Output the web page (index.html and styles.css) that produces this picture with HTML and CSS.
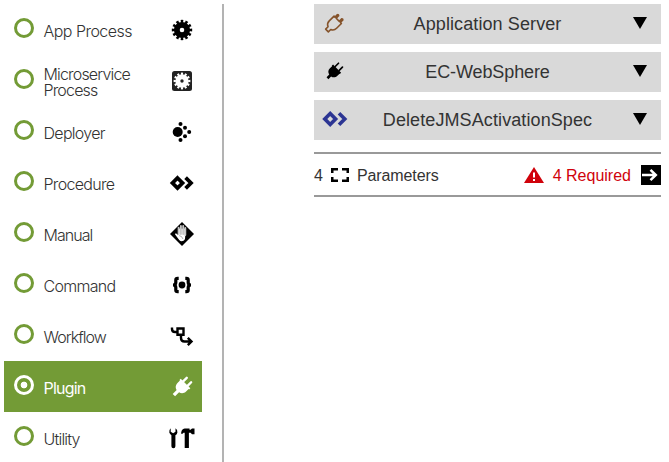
FILE: index.html
```
<!DOCTYPE html>
<html lang="en">
<head>
<meta charset="utf-8">
<title>Process step</title>
<link rel="stylesheet" href="styles.css">
</head>
<body>
<main class="page">
  <nav class="types">
    <div class="type"><i class="radio"></i><span class="label l-app">App Process</span>
      <svg class="icon" viewBox="-13 -13 26 26"><circle r="5.2" fill="none" stroke="#000" stroke-width="5.8"/><circle r="8.7" fill="none" stroke="#000" stroke-width="3" pathLength="24" stroke-dasharray="1.1 .9" stroke-dashoffset=".55"/></svg></div>
    <div class="type"><i class="radio"></i><span class="label l-micro">Microservice<br>Process</span>
      <svg class="icon" viewBox="-13 -13 26 26"><rect x="-10" y="-10" width="20" height="20" rx="2.5" fill="#222"/><circle r="4.2" fill="none" stroke="#fff" stroke-width="5"/><circle r="7.2" fill="none" stroke="#fff" stroke-width="2.4" pathLength="24" stroke-dasharray="1.1 .9" stroke-dashoffset=".55"/></svg></div>
    <div class="type"><i class="radio"></i><span class="label l-deploy">Deployer</span>
      <svg class="icon" viewBox="-13 -13 26 26"><circle cx="-4.3" r="5"/><circle cx="-1.5" cy="-8" r="2"/><circle cx="3" cy="-4.3" r="2"/><circle cx="7.2" r="2"/><circle cx="3" cy="4.3" r="2"/><circle cx="-1.5" cy="8" r="2"/></svg></div>
    <div class="type"><i class="radio"></i><span class="label l-proc">Procedure</span>
      <svg class="icon" viewBox="-13 -13 26 26"><path d="M-4.5-5L.5 0-4.5 5-9.5 0ZM3.6-5.4L9 0 3.6 5.4" fill="none" stroke="#000" stroke-width="3.8"/></svg></div>
    <div class="type"><i class="radio"></i><span class="label l-manual">Manual</span>
      <svg class="icon" viewBox="-13 -13 26 26"><path d="M0-12L12 0 0 12-12 0Z"/><path d="M-4-5.5L-3.8 1-5.4-.2C-6.5-1-7.5-.2-6.7.8L-2.8 6C-1 8 1.7 7.4 3 5L3.8-5.2" fill="#fff"/><path d="M-3.4-6.4V0M-1.1-8V0M1.2-8V0M3.3-6V1" stroke="#c4c4c4" stroke-width="1.9" stroke-linecap="round"/><path d="M-2.8 1.6Q0 2 1 5" fill="none" stroke="#777" stroke-width=".6"/></svg></div>
    <div class="type"><i class="radio"></i><span class="label l-command">Command</span>
      <svg class="icon" viewBox="-13 -13 26 26"><circle r="3.4"/><path d="M-3.3-6.6H-4.4Q-6.2-6.6-6.2-5V-2.5Q-6.2 0-9 0-6.2 0-6.2 2.5V5Q-6.2 6.6-4.4 6.6H-3.3M3.3-6.6H4.4Q6.2-6.6 6.2-5V-2.5Q6.2 0 9 0 6.2 0 6.2 2.5V5Q6.2 6.6 4.4 6.6H3.3" fill="none" stroke="#000" stroke-width="3.2"/></svg></div>
    <div class="type"><i class="radio"></i><span class="label l-work">Workflow</span>
      <svg class="icon" viewBox="-13 -13 26 26"><path d="M-10-8.5V-7Q-10-4-7-4H-5M-4.5-7.5H1.5V-1.2H-4.5ZM-1 0V2Q-1 5.5 2.5 5.5H9.5M5.8 1.8L9.5 5.5 5.8 9.2" fill="none" stroke="#000" stroke-width="2.4"/></svg></div>
    <div class="type selected"><i class="radio"></i><span class="label l-plugin">Plugin</span>
      <svg class="icon plug" viewBox="-13 -13 26 26"><g transform="translate(.3 -.3) rotate(45)" fill="#fff"><path d="M-6.8-4.6H6.8V-2.8H6.1V.4C6.1 4 4 5.7 1.7 6.3V11.9H-1.7V6.3C-4 5.7-6.1 4-6.1.4V-2.8H-6.8Z"/><path d="M-3.1-4V-9.4M3.1-4V-9.4" stroke="#fff" stroke-width="2.4" stroke-linecap="round"/></g></svg></div>
    <div class="type"><i class="radio"></i><span class="label l-util">Utility</span>
      <svg class="icon" viewBox="-13 -13 26 26"><path d="M-11.3-9.8Q-13.4-7.8-12.7-5.4-12.1-3.6-10.6-2.8V8.2Q-10.6 10.3-8.6 10.3T-6.6 8.2V-2.8Q-4.9-3.7-4.6-5.6-4.3-8.2-6.5-9.8V-6.3L-8.9-4.8-11.3-6.3ZM-.9-4.3C-.7-8 .5-9.6 4-9.6H7.5V-8.2H8.6L10-9.6H12.5V-3.7H10L8.6-5.2H6.9V10H2.7V-5.2H1.5L.6-4.3Z"/></svg></div>
  </nav>
  <section class="detail">
    <div class="select"><svg class="lead" viewBox="-13 -13 26 26"><g transform="translate(-.8 .3) rotate(45)" fill="none" stroke="#85532b" stroke-width="1.6" stroke-linejoin="round"><path d="M-5.2-5H-3.8V-8.4Q-3-9.4-2.2-8.4V-5H2.2V-8.4Q3-9.4 3.8-8.4V-5H5.2V1.8C5.2 5 3.4 6.2 1.9 6.8V10.2H-1.9V6.8C-3.4 6.2-5.2 5-5.2 1.8Z"/></g></svg><span class="name n-app">Application Server</span><i class="caret"></i></div>
    <div class="select"><svg class="lead" viewBox="-13 -13 26 26"><g transform="translate(-.6 .3) rotate(45)"><path d="M-5.7-3.8H5.7V-2H5.3V1C5.3 4 3.5 5.5 1.3 6V9.8H-1.3V6C-3.5 5.5-5.3 4-5.3 1V-2H-5.7Z"/><path d="M-2.8-4V-8.6M2.8-4V-8.6" stroke="#000" stroke-width="1.7" stroke-linecap="round"/></g></svg><span class="name n-ec">EC-WebSphere</span><i class="caret"></i></div>
    <div class="select"><svg class="lead" viewBox="-13 -13 26 26"><path d="M-4.8-5.4L.6 0-4.8 5.4-10.2 0ZM4-5.8L9.8 0 4 5.8" fill="none" stroke="#2c3593" stroke-width="3.6"/></svg><span class="name n-delete">DeleteJMSActivationSpec</span><i class="caret"></i></div>
    <div class="params">
      <span class="count">4</span>
      <svg class="brackets" viewBox="0 0 18 14"><path d="M7 1.25H1.25V5M1.25 9V12.75H7M11 1.25H16.75V5M16.75 9V12.75H11" fill="none" stroke="#000" stroke-width="2.5"/></svg>
      <span class="ptext">Parameters</span>
      <svg class="warn" viewBox="0 0 20 16"><path d="M10 0L20 16H0Z" fill="#d0020b"/><path d="M10 5.5V10.5M10 12V14" stroke="#fff" stroke-width="2"/></svg>
      <span class="required">4 Required</span>
      <svg class="go" viewBox="0 0 20 20"><path d="M0 0H20V20H0Z"/><path d="M1 10H14.5M9.5 4.8L14.8 10 9.5 15.2" fill="none" stroke="#fff" stroke-width="2.5"/></svg>
    </div>
  </section>
</main>
</body>
</html>
```
FILE: styles.css
```
* { box-sizing: border-box; }
body { margin: 0; background: #fff; overflow: hidden; font-family: "Liberation Sans", Arial, sans-serif; color: #333; }
.page { display: flex; height: 462px; padding: 4px 8px 0 4px; overflow: hidden; }
.types { width: 220px; flex: none; padding-right: 20px; border-right: 2px solid #b3b3b3; }
.type { display: flex; align-items: center; height: 51px; padding: 0 7px 0 10px; }
.radio { width: 20px; height: 20px; flex: none; margin-bottom: 3px; border: 3px solid #739b36; border-radius: 50%; }
.label { width: 121px; margin: 3px 0 0 9.5px; font: 300 16px/16px Inter, sans-serif; letter-spacing: -.7px; white-space: nowrap; }
.l-app { letter-spacing: -.53px; }
.l-micro { letter-spacing: -.83px; }
.l-manual, .l-work { letter-spacing: -.95px; }
.l-util { letter-spacing: -.8px; }
.icon { width: 26px; height: 26px; flex: none; margin: 1px 0 0 4.5px; overflow: visible; }
.selected { background: #739b36; color: #fff; }
.selected .label { font-weight: 400; letter-spacing: -.8px; }
.selected .radio { border-color: #fff; background: radial-gradient(circle, #fff 3px, transparent 3.7px); }
.detail { flex: 1; margin-left: 90px; }
.select { display: flex; align-items: center; height: 40px; margin-bottom: 8px; padding: 0 14px 0 8px; background: #d9d9d9; }
.lead { width: 26px; height: 26px; flex: none; margin-bottom: 2px; }
.name { flex: 1; padding-right: 6px; text-align: center; font-size: 18px; line-height: 22px; letter-spacing: .1px; }
.n-ec { letter-spacing: -.1px; }
.caret { margin-bottom: 3px; border: solid transparent; border-width: 12px 7px 0; border-top-color: #000; }
.params { display: flex; align-items: center; height: 45px; margin-top: 12px; border: solid #999; border-width: 2px 0; font-size: 16px; line-height: 20px; }
.count, .ptext, .required { padding-top: 2px; }
.ptext { letter-spacing: -.1px; }
.brackets { width: 18px; height: 14px; margin: 0 8px; }
.warn { width: 20px; height: 16px; margin: 0 9px 0 auto; }
.required { color: #d0020b; }
.go { width: 20px; height: 20px; margin-left: 10px; }
```
